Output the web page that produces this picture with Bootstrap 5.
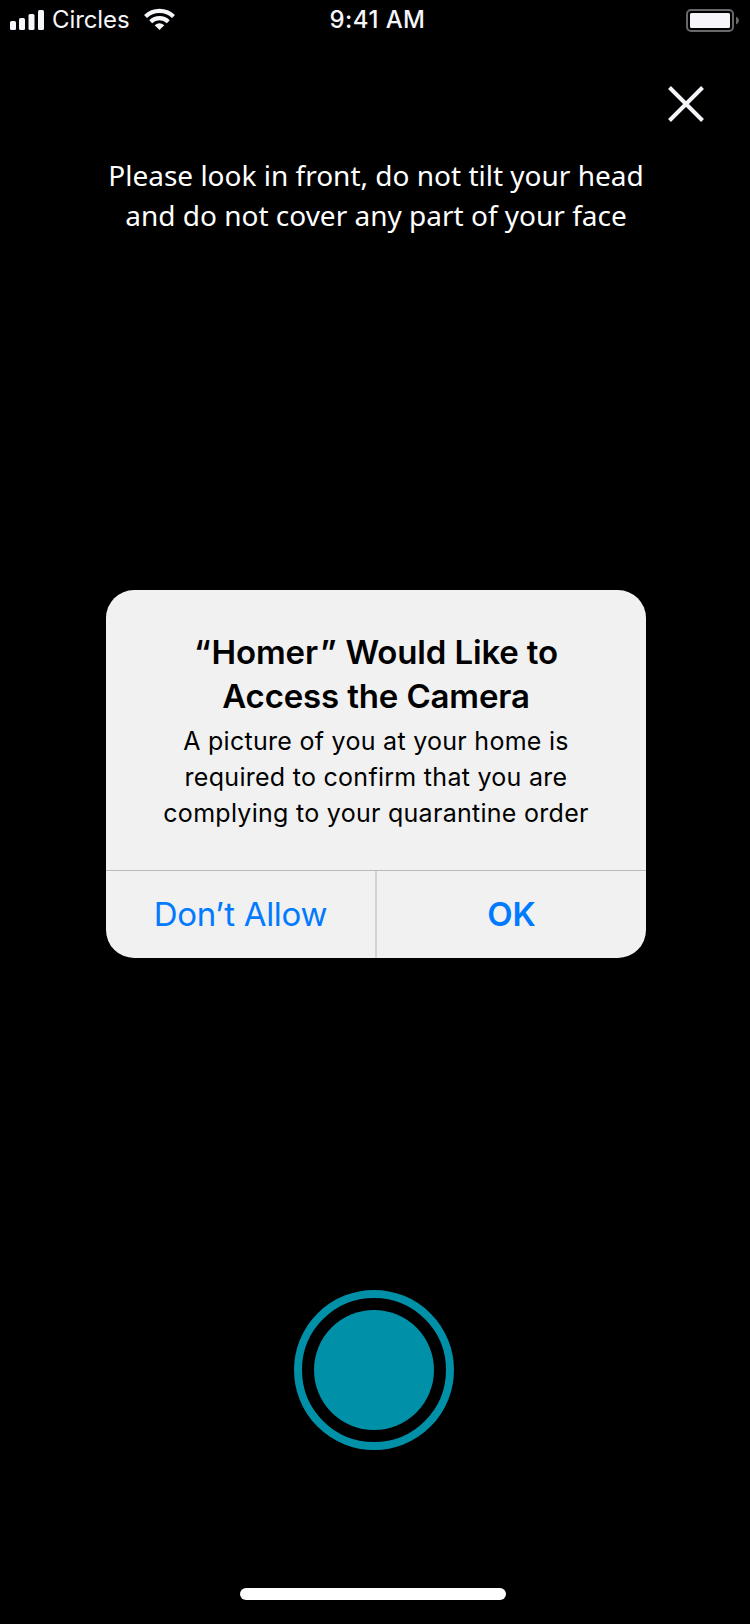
<!DOCTYPE html>
<html lang="en">
<head>
<meta charset="utf-8">
<meta name="viewport" content="width=device-width, initial-scale=1">
<title>Homer</title>
<link href="https://cdn.jsdelivr.net/npm/bootstrap@5.3.0/dist/css/bootstrap.min.css" rel="stylesheet">
<style>
body{background:#000;font-family:"Inter","Liberation Sans",sans-serif}
.screen{width:750px;height:1624px;background:#000}
.status{height:40px;color:#f5f5fa;font-size:24px;line-height:40px;padding:0 11px 0 10px;flex:none}
.status>div{flex:1 1 0}
.carrier{margin-left:8px;letter-spacing:-.1px}
.wifi{margin-left:15px}
.clock{font-weight:500;letter-spacing:.45px;padding-left:6px}
.top-row{height:108px;padding:43px 42px 0 0;flex:none}
.close-btn{width:44px;height:44px}
.hint{font-family:"Noto Sans",sans-serif;font-size:28px;line-height:40px;height:80px;margin:7px 0 0 2px;color:#fff;flex:none}
.alert-box{width:540px;height:368px;margin:355px 0 0 106px;border:0;border-radius:28px;background:#f1f1f1;color:#000;overflow:hidden;flex:none}
.alert-text{height:280px;padding-top:40px}
.alert-title{font-size:33px;line-height:44px;font-weight:600;margin:0;letter-spacing:-.15px}
.quote-open{margin-right:1px}
.quote-close{margin:0 1px 0 2px}
.alert-copy{font-size:25px;line-height:36px;margin:5px 0 0;letter-spacing:.28px}
.alert-actions{height:88px;border-top:1px solid #b9bab9}
.alert-actions .btn{border:0;border-radius:0;color:#007aff;font-size:33px;line-height:44px;padding:0 0 2px}
.deny{flex:0 0 271px;border-right:2px solid #d3d3d3!important;letter-spacing:-.28px}
.shutter{width:160px;height:160px;margin:332px 0 0 294px;border:8px solid #0090a8;padding:12px;flex:none}
.shutter span{background:#0090a8}
.home-bar{width:266px;height:12px;margin:138px 0 0 240px;border-radius:6px;background:#fff;flex:none}
</style>
</head>
<body>
<main class="screen d-flex flex-column overflow-hidden">
  <header class="status d-flex">
    <div class="d-flex">
      <svg class="mt-2" width="34" height="24" viewBox="10 8 34 24" fill="currentColor"><rect x="10" y="21" width="6" height="9" rx="1.5"/><rect x="19" y="18" width="6" height="12" rx="1.5"/><rect x="28.500" y="14" width="6" height="16" rx="1.5"/><rect x="38" y="10" width="6" height="20" rx="1.500"/></svg>
      <span class="carrier">Circles</span>
      <svg class="wifi mt-2" width="32" height="23" viewBox="0 0 32 23" fill="none" stroke="currentColor" stroke-width="4.200"><path d="M1.500 8.400A20.300 20.300 0 0 1 29.500 8.400"/><path d="M6.700 13.700A12.800 12.800 0 0 1 24.300 13.700"/><path d="M15.500 22L10.700 17.300Q15.500 13.300 20.300 17.300Z" fill="currentColor" stroke="none"/></svg>
    </div>
    <div class="clock text-center"><span>9:41 AM</span></div>
    <div class="text-end d-flex justify-content-end"><svg class="mt-2" width="54" height="25" viewBox="685 8 54 25"><rect x="687" y="10" width="46" height="21" rx="4" fill="none" stroke="#68686a" stroke-width="2"/><rect x="690" y="13" width="40" height="15" rx="1.500" fill="#f5f5fa"/><path d="M736 16.500Q739 17.800 739 20.500T736 24.500Z" fill="#68686a"/></svg></div>
  </header>
  <div class="top-row d-flex justify-content-end">
    <button class="close-btn btn p-0 border-0 d-flex" aria-label="Close"><svg width="44" height="44" viewBox="664 83 44 44"><path d="M669.500 87.500L702.500 120.500M702.500 87.500L669.500 120.500" stroke="#f5f5fa" stroke-width="4"/></svg></button>
  </div>
  <p class="hint text-center mb-0">Please look in front, do not tilt your head<br>and do not cover any part of your face</p>
  <section class="alert-box card" role="alertdialog">
    <div class="alert-text text-center">
      <h1 class="alert-title"><span class="quote-open">“</span>Homer<span class="quote-close">”</span> Would Like to<br>Access the Camera</h1>
      <p class="alert-copy">A picture of you at your home is<br>required to confirm that you are<br>complying to your quarantine order</p>
    </div>
    <div class="alert-actions d-flex">
      <button class="btn deny">Don’t Allow</button>
      <button class="btn flex-fill fw-semibold">OK</button>
    </div>
  </section>
  <button class="shutter btn rounded-circle d-flex" aria-label="Take picture"><span class="rounded-circle w-100 h-100"></span></button>
  <div class="home-bar"></div>
</main>
<script src="https://cdn.jsdelivr.net/npm/bootstrap@5.3.0/dist/js/bootstrap.bundle.min.js"></script>
</body>
</html>
